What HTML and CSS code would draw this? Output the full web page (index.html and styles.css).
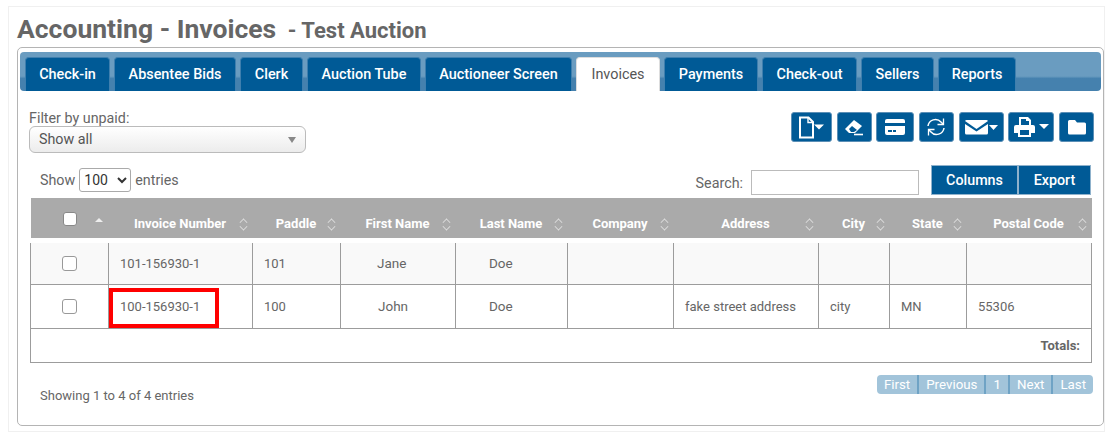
FILE: index.html
```html
<!DOCTYPE html>
<html lang="en">
  <head>
    <meta charset="UTF-8" />
    <title>Accounting - Invoices</title>
    <link rel="stylesheet" href="styles.css">
  </head>
  <body>
    <section class="page">
      <h1 class="page-title">Accounting - Invoices <small>- Test Auction</small></h1>

      <div class="panel">
        <nav class="tabs">
          <a class="tab tab-checkin">Check-in</a>
          <a class="tab tab-absentee">Absentee Bids</a>
          <a class="tab tab-clerk">Clerk</a>
          <a class="tab tab-tube">Auction Tube</a>
          <a class="tab tab-screen">Auctioneer Screen</a>
          <a class="tab tab-invoices active">Invoices</a>
          <a class="tab tab-payments">Payments</a>
          <a class="tab tab-checkout">Check-out</a>
          <a class="tab tab-sellers">Sellers</a>
          <a class="tab tab-reports">Reports</a>
        </nav>

        <div class="toolbar">
          <div class="filter">
            <label>Filter by unpaid:</label>
            <div class="fake-select">Show all<span class="select-arrow"></span></div>
          </div>
          <div class="icon-buttons">
            <button class="icon-btn btn-new">
              <svg width="27" height="23" viewBox="0 0 27 23"><path d="M2 1.500h8.500l4.500 4.500v15.500H2z" fill="none" stroke="#fff" stroke-width="2"/><path d="M10 2v4.500h5" fill="none" stroke="#fff" stroke-width="1.400"/><path d="M16 8.500h10l-5 5z" fill="#fff"/></svg>
            </button>
            <button class="icon-btn btn-erase">
              <svg width="20" height="20" viewBox="0 0 20 20"><path d="M1 12 10 3l8 6-7 7H5z" fill="#fff"/><path d="M5 12l3-3 5 4-3 2H7z" fill="#005a96"/><path d="M10 17.500h9" stroke="#fff" stroke-width="1.600"/></svg>
            </button>
            <button class="icon-btn btn-card">
              <svg width="22" height="18" viewBox="0 0 22 18"><path d="M1 3a2 2 0 0 1 2-2h16a2 2 0 0 1 2 2v2H1zM1 8h20v7a2 2 0 0 1-2 2H3a2 2 0 0 1-2-2z" fill="#fff"/><path d="M4 12h4v2H4zM9 12h3v2H9z" fill="#005a96"/></svg>
            </button>
            <button class="icon-btn btn-sync">
              <svg width="20" height="20" viewBox="0 0 20 20" fill="none" stroke="#fff" stroke-width="1.500"><path d="M2 9a7.500 7.500 0 0 1 13-4l2 2"/><path d="M18 11a7.500 7.500 0 0 1-13 4l-2-2"/><path d="M17.500 1.500V7.500h-6M2.500 18.500V12.500h6" stroke-width="1.300"/></svg>
            </button>
            <button class="icon-btn btn-mail">
              <svg width="35" height="16" viewBox="0 0 35 16"><path d="M1 2a2 2 0 0 1 2-1h19a2 2 0 0 1 2 1l-11.500 8z" fill="#fff"/><path d="M1 5v9a1.500 1.500 0 0 0 1.500 1.500h20A1.500 1.500 0 0 0 24 14V5l-11.500 7.500z" fill="#fff"/><path d="M25 6h9l-4.500 5z" fill="#fff"/></svg>
            </button>
            <button class="icon-btn btn-print">
              <svg width="36" height="22" viewBox="0 0 36 22"><path d="M6 1h9l3 3v5h-2V5h-3V3H8v6H6z" fill="#fff"/><path d="M3 9h17a2 2 0 0 1 2 2v6h-4v4H5v-4H1v-6a2 2 0 0 1 2-2z" fill="#fff"/><path d="M7 14h9v5H7z" fill="#005a96"/><path d="M26 8h10l-5 5z" fill="#fff"/></svg>
            </button>
            <button class="icon-btn btn-folder">
              <svg width="20" height="16" viewBox="0 0 20 16"><path d="M1 2.500A1.500 1.500 0 0 1 2.500 1H8l2 2.500h7.500A1.500 1.500 0 0 1 19 5v9a1.500 1.500 0 0 1-1.500 1.500h-15A1.500 1.500 0 0 1 1 14z" fill="#fff"/></svg>
            </button>
          </div>
        </div>

        <div class="table-controls">
          <div class="length">
            Show
            <select class="length-select"><option>100</option></select>
            entries
          </div>
          <div class="search">
            <label>Search:</label>
            <input class="search-input" type="text" />
            <div class="export-group">
              <button class="text-btn btn-columns">Columns</button>
              <button class="text-btn btn-export">Export</button>
            </div>
          </div>
        </div>

        <table class="invoices">
          <colgroup>
            <col class="col-check" /><col class="col-invoice" /><col class="col-paddle" />
            <col class="col-first" /><col class="col-last" /><col class="col-company" />
            <col class="col-address" /><col class="col-city" /><col class="col-state" />
            <col class="col-postal" />
          </colgroup>
          <thead>
            <tr>
              <th class="check-head"><span class="head-box"></span><span class="sort-up"></span></th>
              <th>Invoice Number<span class="sort"></span></th>
              <th>Paddle<span class="sort"></span></th>
              <th>First Name<span class="sort"></span></th>
              <th>Last Name<span class="sort"></span></th>
              <th>Company<span class="sort"></span></th>
              <th>Address<span class="sort"></span></th>
              <th>City<span class="sort"></span></th>
              <th>State<span class="sort"></span></th>
              <th>Postal Code<span class="sort"></span></th>
            </tr>
          </thead>
          <tbody>
            <tr class="row-odd">
              <td class="check-cell"><span class="row-box"></span></td>
              <td>101-156930-1</td>
              <td>101</td>
              <td class="name-first">Jane</td>
              <td class="name-last">Doe</td>
              <td></td><td></td><td></td><td></td><td></td>
            </tr>
            <tr>
              <td class="check-cell"><span class="row-box"></span></td>
              <td class="marked">100-156930-1<span class="red-box"></span></td>
              <td>100</td>
              <td class="name-first john">John</td>
              <td class="name-last">Doe</td>
              <td></td>
              <td>fake street address</td>
              <td>city</td>
              <td>MN</td>
              <td>55306</td>
            </tr>
          </tbody>
          <tfoot>
            <tr>
              <td class="totals" colspan="10">Totals:</td>
            </tr>
          </tfoot>
        </table>

        <div class="table-footer">
          <div class="info">Showing 1 to 4 of 4 entries</div>
          <div class="pager">
            <a>First</a><a>Previous</a><a>1</a><a>Next</a><a>Last</a>
          </div>
        </div>
      </div>
    </section>
  </body>
</html>
```

FILE: styles.css
```css
* {
  margin: 0;
  padding: 0;
  box-sizing: border-box;
}

body {
  background: #fff;
  font-family: Roboto, "Liberation Sans", sans-serif;
  font-size: 14.3px;
  color: #666;
  overflow: hidden;
}

.page {
  width: 1097px;
  height: 426px;
  margin: 6px 0 0 8px;
  padding: 5px 1px 0 8px;
  border: 1px solid #f0f0f0;
}

.page-title {
  height: 35px;
  font-size: 26.5px;
  line-height: 33px;
  font-weight: 700;
  color: #666;
  white-space: nowrap;
}

.page-title small {
  margin-left: 5px;
  font-size: 22px;
  font-weight: 700;
}

.panel {
  width: 1087px;
  height: 379px;
  padding: 4px 2px 0;
  border: 1px solid #b4b4b4;
  border-radius: 5px;
}

/* tabs */
.tabs {
  display: flex;
  align-items: flex-end;
  gap: 4px;
  height: 39px;
  padding-left: 5px;
  border-radius: 4px;
  background: linear-gradient(#6a9cc0 0, #6a9cc0 62%, #4581ae 68%, #4581ae 100%);
}

.tab {
  display: block;
  height: 34px;
  line-height: 34px;
  text-align: center;
  font-size: 14.4px;
  font-weight: 500;
  color: #fff;
  background: #005a96;
  border: 1px solid #3f7fae;
  border-bottom: 0;
  border-radius: 4px 4px 0 0;
}

.tab.active {
  background: #fff;
  color: #555;
  font-weight: 400;
  border-color: #ddd;
}

.tab-checkin { width: 85px; }
.tab-absentee { width: 122px; }
.tab-clerk { width: 63px; }
.tab-tube { width: 114px; }
.tab-screen { width: 147px; }
.tab-invoices { width: 84px; }
.tab-payments { width: 94px; }
.tab-checkout { width: 95px; }
.tab-sellers { width: 73px; }
.tab-reports { width: 78px; }

/* filter and icon buttons */
.toolbar {
  display: flex;
  justify-content: space-between;
  height: 74px;
  padding: 19px 7px 0 9px;
}

.filter label {
  display: block;
  height: 16px;
  line-height: 16px;
}

.fake-select {
  position: relative;
  width: 277px;
  height: 27px;
  padding-left: 9px;
  line-height: 24px;
  border: 1px solid #bbb;
  border-radius: 6px;
  background: linear-gradient(#fff, #ececec);
  color: #555;
}

.select-arrow {
  position: absolute;
  right: 9px;
  top: 10px;
  border-left: 4px solid transparent;
  border-right: 4px solid transparent;
  border-top: 6px solid #888;
}

.icon-buttons {
  display: flex;
  gap: 4.7px;
  margin-top: 2px;
}

.icon-btn {
  display: flex;
  align-items: center;
  justify-content: center;
  height: 30px;
  background: #005a96;
  border: 1px solid #5b8fb6;
  border-radius: 3px;
}

.btn-new { width: 41px; }
.btn-erase { width: 35px; }
.btn-card { width: 38px; }
.btn-sync { width: 35px; }
.btn-mail { width: 45px; }
.btn-print { width: 46px; }
.btn-folder { width: 35px; }

/* show entries, search, export */
.table-controls {
  display: flex;
  justify-content: space-between;
  height: 33px;
  padding: 0 10px 0 20px;
}

.length {
  display: flex;
  align-items: center;
  gap: 4px;
  height: 24px;
  margin-top: 3px;
}

.length-select {
  width: 52px;
  height: 24px;
  font-family: Roboto, "Liberation Sans", sans-serif;
  font-size: 14px;
  background: #fff;
  border: 1px solid #aaa;
  border-radius: 3px;
  color: #333;
}

.search {
  display: flex;
  align-items: flex-start;
}

.search label {
  margin: 10px 8px 0 0;
  line-height: 17px;
}

.search-input {
  width: 168px;
  height: 25px;
  margin: 5px 12px 0 0;
  border: 1px solid #bbb;
}

.export-group {
  display: flex;
}

.text-btn {
  height: 30px;
  font-family: Roboto, "Liberation Sans", sans-serif;
  font-size: 14.3px;
  font-weight: 500;
  color: #fff;
  background: #005a96;
  border: 1px solid #8fb2cc;
}

.btn-columns { width: 87px; }
.btn-export { width: 73px; }

/* table */
.invoices {
  width: 1061px;
  margin-left: 10px;
  border-collapse: collapse;
  table-layout: fixed;
  font-size: 13px;
}

.col-check { width: 78px; }
.col-invoice { width: 144px; }
.col-paddle { width: 88px; }
.col-first { width: 115px; }
.col-last { width: 112px; }
.col-company { width: 106px; }
.col-address { width: 145px; }
.col-city { width: 71px; }
.col-state { width: 77px; }
.col-postal { width: 125px; }

.invoices th {
  position: relative;
  height: 42px;
  padding: 12px 1px 0 0;
  background: #aaa;
  border-bottom: 5px solid #fff;
  font-size: 13px;
  font-weight: 700;
  color: #fff;
  text-align: center;
  white-space: nowrap;
}

.invoices td {
  height: 44px;
  padding: 0 11px;
  border: 1px solid #9c9c9c;
  color: #666;
  background: #fff;
}

.invoices .row-odd td {
  background: #f9f9f9;
}

.sort {
  position: absolute;
  right: 5px;
  top: 20px;
  width: 8px;
  height: 13px;
}

.sort::before,
.sort::after {
  content: "";
  position: absolute;
  left: 0;
  width: 6px;
  height: 6px;
  border-left: 1.5px solid #e4e4e4;
  border-top: 1.5px solid #e4e4e4;
}

.sort::before {
  top: 1px;
  transform: rotate(45deg) scale(0.8);
}

.sort::after {
  bottom: 1px;
  transform: rotate(225deg) scale(0.8);
}

.check-head {
  text-align: left;
}

.head-box {
  position: absolute;
  left: 32px;
  top: 14px;
  width: 14px;
  height: 14px;
  background: #fff;
  border: 1px solid #888;
  border-radius: 3px;
}

.sort-up {
  position: absolute;
  left: 64px;
  top: 20px;
  border-left: 4px solid transparent;
  border-right: 4px solid transparent;
  border-bottom: 4px solid #eee;
}

.check-cell {
  text-align: center;
}

.row-box {
  display: inline-block;
  width: 15px;
  height: 15px;
  margin-top: 3px;
  background: #fff;
  border: 1px solid #999;
  border-radius: 3px;
}

.name-first {
  font-size: 13.5px;
  padding-left: 36px !important;
}

.name-first.john {
  padding-left: 37px !important;
}

.name-last {
  font-size: 13.5px;
  padding-left: 33px !important;
}

.marked {
  position: relative;
}

.red-box {
  position: absolute;
  left: 0;
  top: 3px;
  width: 110px;
  height: 40px;
  border: 4px solid #f00;
}

.invoices .totals {
  height: 34px;
  text-align: right;
  font-weight: 700;
  font-size: 13px;
}

/* footer */
.table-footer {
  display: flex;
  justify-content: space-between;
  padding: 12px 8px 0 20px;
}

.info {
  margin-top: 13px;
  font-size: 13px;
}

.pager {
  display: flex;
  height: 19px;
  border-radius: 4px;
  overflow: hidden;
}

.pager a {
  padding: 0 7px;
  line-height: 19px;
  font-size: 13.3px;
  color: #fff;
  background: #a2c4da;
  border-left: 2px solid #6fa3c5;
}

.pager a:first-child {
  border-left: 0;
}
```
